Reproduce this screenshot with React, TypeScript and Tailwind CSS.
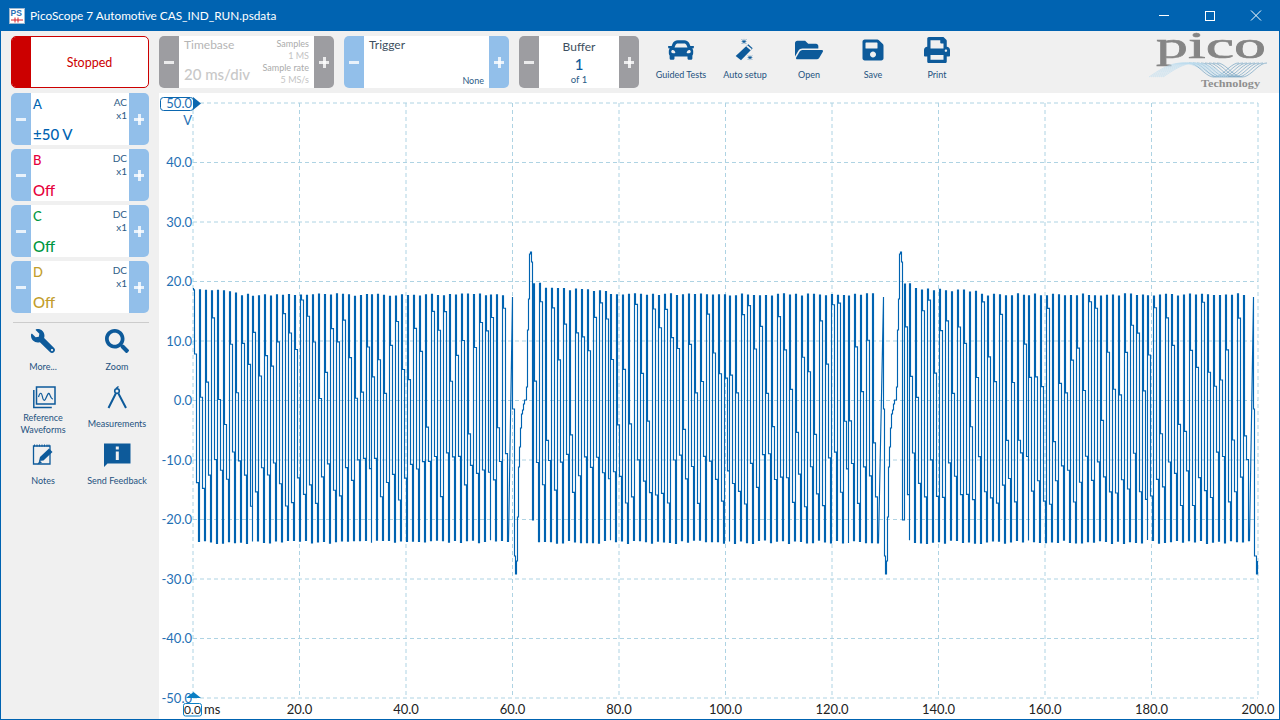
import { ReactNode } from "react";
import { FaCar, FaFolderOpen, FaPrint, FaSave, FaSearch, FaWrench } from "react-icons/fa";

const uiFont = { fontFamily: 'Lato, "Open Sans", sans-serif' };

const rnd = (n: number) => {
  const v = Math.sin(n * 12.9898) * 43758.5453;
  return v - Math.floor(v);
};

const REV = 370.4;

// one firing event, coordinates taken at the first one and shifted per revolution
const eventPoints: number[][] = [
  [512.7, 297], [512.7, 409], [514, 409], [514, 556], [515.5, 556], [515.5, 574], [516.4, 574], [516.4, 561],
  [517.4, 561], [517.4, 517], [518, 517], [518, 467], [519, 467], [519, 447], [520, 447], [520, 428],
  [521, 428], [521, 414], [522, 414], [522, 410], [523, 410], [523, 404], [524.5, 404], [524.5, 400],
  [526.4, 400], [526.4, 387], [527.2, 387], [527.2, 330], [528.2, 330], [528.2, 299], [529.3, 299],
  [529.3, 254], [530.5, 254], [530.5, 252], [531.2, 252], [531.2, 262], [532.2, 262], [532.2, 520], [533.6, 520],
];

const snap = (x: number) => Math.floor(x) + 0.5;

function buildWave() {
  const pts: number[][] = [];
  let x = 193.5;
  let i = 0;
  let k = 0;
  pts.push([x, 288]);
  while (x < 1258) {
    const nextEvent = 512.7 + REV * k;
    if (x + 5.95 > nextEvent) {
      eventPoints.forEach(([ex, ey]) => pts.push([snap(ex + REV * k), ey]));
      x = 533.6 + REV * k;
      k++;
      continue;
    }
    const u = (((x - 533) % REV) + REV) % REV / REV;
    let top = u < 0.2 ? 288 + u * 20 : 295;
    if (u < 0.02) top = 284;
    top += rnd(i + 3) * 2.4 - 1.2;
    const low = rnd(i + 50) * 100;
    const a = low > 86 ? 420 + rnd(i + 7) * 25 : 300 + rnd(i + 9) * 100;
    const c = 452 + rnd(i + 21) * 55;
    const bottom = 540 + rnd(i + 33) * 3.5;
    const x0 = snap(x);
    pts.push([x0, top], [x0 + 1, top], [x0 + 1, a], [x0 + 3, a], [x0 + 3, c], [x0 + 5, c], [x0 + 5, bottom], [snap(x + 5.95), bottom]);
    x += 5.95;
    i++;
  }
  return pts.filter((p) => p[0] <= 1258).map((p) => `${p[0].toFixed(1)},${p[1].toFixed(1)}`).join(" ");
}

const wave = buildWave();
const gridX = [193, 299.5, 406, 512.5, 619, 725.5, 832, 938.5, 1045, 1151.5, 1258];
const gridY = [103, 162.5, 222, 281.5, 341, 400.5, 460, 519.5, 579, 638.5, 698];
const yLabels = ["", "40.0", "30.0", "20.0", "10.0", "0.0", "-10.0", "-20.0", "-30.0", "-40.0", "-50.0"];
const xLabels = ["", "20.0", "40.0", "60.0", "80.0", "100.0", "120.0", "140.0", "160.0", "180.0", "200.0"];

function Scope() {
  return (
    <svg viewBox="159 93 1120 625" className="block w-[1120px] h-[625px]" style={uiFont}>
      {gridY.map((y) => (
        <line key={y} x1={193} x2={1258} y1={y} y2={y} stroke="#aed3e3" strokeWidth={1} strokeDasharray="4 3" />
      ))}
      {gridX.map((x) => (
        <line key={x} x1={x} x2={x} y1={103} y2={698} stroke="#aed3e3" strokeWidth={1} strokeDasharray="4 3" />
      ))}
      <polyline points={wave} fill="none" stroke="#0063b1" strokeWidth={1.15} />
      {yLabels.map((l, i) => (
        <text key={l + i} x={192} y={gridY[i] + 4.5} textAnchor="end" fontSize={13} fill="#1f70b4">{l}</text>
      ))}
      {xLabels.map((l, i) => (
        <text key={l + i} x={gridX[i]} y={714} textAnchor="middle" fontSize={13} fill="#222">{l}</text>
      ))}
      <rect x={160.5} y={97.5} width={33} height={13} rx={3} fill="#fff" stroke="#0b67b0" strokeWidth={1} />
      <polygon points="193,97 201,103.5 193,110" fill="#0b67b0" />
      <text x={192} y={108} textAnchor="end" fontSize={13} fill="#1f70b4">50.0</text>
      <text x={192} y={125} textAnchor="end" fontSize={13} fill="#1f70b4">V</text>
      <polygon points="186,698 193.5,692 201,698" fill="#0b7fc4" />
      <rect x={183.5} y={703.5} width={18} height={12.5} rx={2} fill="#fff" stroke="#0b7fc4" strokeWidth={1} />
      <text x={192.5} y={714} textAnchor="middle" fontSize={12} fill="#222">0.0</text>
      <text x={204} y={714} fontSize={13} fill="#222">ms</text>
    </svg>
  );
}

function Stepper({ side, tone }: { side: "minus" | "plus"; tone: "blue" | "gray" }) {
  return (
    <div
      className={`w-5 shrink-0 flex items-center justify-center ${tone === "blue" ? "bg-[#92bfea]" : "bg-[#9d9da1]"}`}
    >
      <div className="relative w-[10px] h-[11px]">
        <div className="absolute left-0 right-0 top-[4px] h-[3px] bg-white/80" />
        {side === "plus" && <div className="absolute top-0 bottom-0 left-[4px] w-[3px] bg-white/80" />}
      </div>
    </div>
  );
}

function Control({ width, tone, children }: { width: string; tone: "blue" | "gray"; children: ReactNode }) {
  return (
    <div className={`flex h-[52px] rounded-[5px] overflow-hidden ${width}`}>
      <Stepper side="minus" tone={tone} />
      <div className="flex-1 bg-white relative min-w-0">{children}</div>
      <Stepper side="plus" tone={tone} />
    </div>
  );
}

function Channel({ name, color, coupling, value }: { name: string; color: string; coupling: string; value: string }) {
  return (
    <Control width="w-[138px]" tone="blue">
      <div className="flex h-full justify-between pl-[2px] pr-[2px] pt-[3px]">
        <div className="flex flex-col justify-between pb-[2px]">
          <div className={`text-[13px] leading-[16px] font-medium ${color}`}>{name}</div>
          <div className={`text-[15px] leading-[18px] font-medium ${color}`}>{value}</div>
        </div>
        <div className="text-right text-[10px] leading-[13px] text-[#2d5b86]">
          <div>{coupling}</div>
          <div>x1</div>
        </div>
      </div>
    </Control>
  );
}

function ToolbarButton({ icon, label }: { icon: ReactNode; label: string }) {
  return (
    <div className="w-16 flex flex-col items-center pt-[6px]">
      <div className="h-[26px] flex items-center justify-center text-[#0d5a9a]">{icon}</div>
      <div className="mt-[5px] text-[9px] leading-[14px] text-[#24527f] whitespace-nowrap">{label}</div>
    </div>
  );
}

function SideTool({ icon, label, gap }: { icon: ReactNode; label: ReactNode; gap: string }) {
  return (
    <div className="h-[57px] flex flex-col items-center">
      <div className="h-[24px] flex items-center justify-center text-[#0d5a9a]">{icon}</div>
      <div className={`text-[9px] leading-[12px] text-center text-[#24527f] whitespace-nowrap ${gap}`}>{label}</div>
    </div>
  );
}

function MagicIcon() {
  return (
    <svg width="24" height="24" viewBox="0 0 24 24" fill="currentColor">
      <path d="M15.300 6.300L19.700 10.300L8 22.300L2.700 18z" />
      <path d="M13.200 8.500L14.400 7.200L18.800 11L17.600 12.300z" fill="#f0f0f0" />
      <path d="M11 0.600L11.500 3L14 3.600L11.500 4.200L11 6.600L10.500 4.200L8 3.600L10.500 3z" />
      <path d="M8.800 1.400L13.200 5.800M13.200 1.400L8.800 5.800" stroke="currentColor" strokeWidth="0.700" />
      <path d="M17 16.800L17.500 19L20 19.600L17.500 20.200L17 22.400L16.500 20.200L14 19.600L16.500 19z" />
      <path d="M15 17.600L19 21.600M19 17.600L15 21.600" stroke="currentColor" strokeWidth="0.700" />
    </svg>
  );
}

function RefWaveIcon() {
  return (
    <svg width="25" height="24" viewBox="0 0 25 24" fill="none" stroke="currentColor" strokeWidth="1.500">
      <rect x="5.500" y="1" width="18.500" height="17" fill="#f0f0f0" />
      <path d="M2.800 4v17.500h18" />
      <path d="M7.500 11c1.500-5 3-5 4 0s2.500 3.500 3.500 1 2.500-6 3.500-4 1.500 5 3.500 5" strokeWidth="1.200" />
    </svg>
  );
}

function CalipersIcon() {
  return (
    <svg width="22" height="24" viewBox="0 0 22 24" fill="none" stroke="currentColor" strokeWidth="2">
      <circle cx="11" cy="5" r="2.300" strokeWidth="1.600" />
      <path d="M9.800 7.500L2.500 22M12.400 7.500L20 22" />
      <path d="M10 2.500L12.500 0.500" strokeWidth="1.400" />
    </svg>
  );
}

function NotesIcon() {
  return (
    <svg width="22" height="24" viewBox="0 0 22 24" fill="none" stroke="currentColor" strokeWidth="1.300">
      <path d="M1.500 3h16.500v18H1.500z" />
      <path d="M2.500 1.500v2M5 1.500v2M7.500 1.500v2M10 1.500v2M12.500 1.500v2M15 1.500v2M17 1.500v2" strokeWidth="1" />
      <path d="M7 18l1-4 9-8.500 3.500 3.500-9 8.500z" fill="currentColor" stroke="none" />
      <path d="M5.500 21.500l2-4 2.500 2z" fill="currentColor" stroke="none" />
    </svg>
  );
}

function FeedbackIcon() {
  return (
    <svg width="28" height="24" viewBox="0 0 28 24" fill="currentColor">
      <path d="M1 0.500h26.500v20H4.500L1 24z" />
      <rect x="12.800" y="3.500" width="3" height="3" fill="#f0f0f0" />
      <rect x="12.800" y="8.500" width="3" height="8.500" fill="#f0f0f0" />
    </svg>
  );
}

function AppIcon() {
  return (
    <svg width="16" height="16" viewBox="0 0 16 16">
      <rect x="0.500" y="0.500" width="15" height="15" fill="#fff" stroke="#9db8d0" />
      <text x="1.500" y="8" fontSize="8.500" fontWeight="700" fill="#2a6fb5" fontFamily="Liberation Sans, sans-serif">PS</text>
      <path d="M2 12h4v-2.500M6 12v2.500M6 12h3M9 9.500v5M9 12h5" stroke="#d8232a" strokeWidth="1" fill="none" />
    </svg>
  );
}

function PicoLogo() {
  const curves: ReactNode[] = [];
  for (let n = 0; n < 8; n++) {
    const light: string[] = [];
    const dark: string[] = [];
    for (let t = 0; t <= 1.001; t += 0.05) {
      const lx = 2 * n + t * 65;
      light.push(`${lx.toFixed(1)},${(46 - 14 * Math.sin(Math.PI * t)).toFixed(1)}`);
      const dx = 40 + 4 * n + t * 50;
      dark.push(`${dx.toFixed(1)},${(39 - 7 * Math.cos(2 * Math.PI * t)).toFixed(1)}`);
    }
    curves.push(<polyline key={`l${n}`} points={light.join(" ")} fill="none" stroke="#bcdcee" strokeWidth="0.6" />);
    curves.push(<polyline key={`d${n}`} points={dark.join(" ")} fill="none" stroke="#5c93b8" strokeWidth="0.6" />);
  }
  return (
    <svg width="122" height="60" viewBox="0 0 122 60" className="block overflow-visible">
      <text x="7" y="27" fontSize="38" fontFamily="Liberation Serif, serif" fill="#858585" stroke="#858585" strokeWidth="0.6"
        textLength="110" lengthAdjust="spacingAndGlyphs">pico</text>
      {curves}
      <text x="52" y="56" fontSize="10.500" fontWeight="700" fontFamily="Liberation Serif, serif" fill="#8f8f8f"
        textLength="59" lengthAdjust="spacingAndGlyphs">Technology</text>
    </svg>
  );
}

export default function App() {
  return (
    <div className="w-[1280px] h-[720px] flex flex-col overflow-hidden bg-[#f0f0f0] border-x border-b border-[#0063b1]" style={uiFont}>
      <div className="h-[31px] shrink-0 -mx-px flex items-center bg-[#0063b1] text-white">
        <div className="pl-[9px] pr-[5px] flex items-center"><AppIcon /></div>
        <div className="text-[11.8px] flex-1">PicoScope 7 Automotive CAS_IND_RUN.psdata</div>
        <div className="w-[46px] h-[31px] flex items-center justify-center">
          <div className="w-[10px] h-px bg-white" />
        </div>
        <div className="w-[46px] h-[31px] flex items-center justify-center">
          <div className="w-[10px] h-[10px] border border-white" />
        </div>
        <svg width="46" height="31" viewBox="0 0 46 31" className="mr-px">
          <path d="M18 10.500l10 10M28 10.500l-10 10" stroke="#fff" strokeWidth="1" />
        </svg>
      </div>

      <div className="h-[62px] shrink-0 flex items-start pl-[10px] pt-[5px] gap-[10px]">
        <div className="w-[138px] h-[52px] flex rounded-[5px] border border-[#cc0000] overflow-hidden bg-white">
          <div className="w-[19px] bg-[#cc0000]" />
          <div className="flex-1 flex items-center justify-center text-[12.5px] pt-[2px] text-[#cc0000]">Stopped</div>
        </div>

        <Control width="w-[175px]" tone="gray">
          <div className="h-full flex justify-between px-[5px]">
            <div className="flex flex-col justify-between pb-[4px] text-[#b5b5b5]">
              <div className="text-[12px] leading-[18px]">Timebase</div>
              <div className="text-[15px] leading-[20px] font-medium text-[#c8c8c8]">20 ms/div</div>
            </div>
            <div className="text-right text-[9px] leading-[12px] pt-[2px] text-[#ababab]">
              <div>Samples</div>
              <div className="text-[#c4c4c4]">1 MS</div>
              <div>Sample rate</div>
              <div className="text-[#c4c4c4]">5 MS/s</div>
            </div>
          </div>
        </Control>

        <Control width="w-[165px]" tone="blue">
          <div className="h-full flex flex-col justify-between px-[5px]">
            <div className="text-[12px] leading-[18px] text-[#3d4f60]">Trigger</div>
            <div className="text-right text-[9px] leading-[14px] text-[#2d5b86]">None</div>
          </div>
        </Control>

        <Control width="w-[120px]" tone="gray">
          <div className="h-full flex flex-col items-center pt-[2px]">
            <div className="text-[12px] leading-[18px] text-[#3d4f60]">Buffer</div>
            <div className="text-[15px] leading-[17px] font-medium text-[#0d5a9a]">1</div>
            <div className="text-[9.5px] leading-[14px] text-[#2d5b86]">of 1</div>
          </div>
        </Control>

        <div className="flex -mt-[5px]">
          <ToolbarButton icon={<FaCar size={26} />} label="Guided Tests" />
          <ToolbarButton icon={<MagicIcon />} label="Auto setup" />
          <ToolbarButton icon={<FaFolderOpen size={28} />} label="Open" />
          <ToolbarButton icon={<FaSave size={24} />} label="Save" />
          <ToolbarButton icon={<FaPrint size={26} />} label="Print" />
        </div>

        <div className="ml-auto -mt-[5px] pr-[8px]"><PicoLogo /></div>
      </div>

      <div className="flex flex-1 min-h-0">
        <div className="w-[158px] shrink-0 flex flex-col pl-[10px]">
          <div className="flex flex-col gap-1">
            <Channel name="A" color="text-[#0063b1]" coupling="AC" value="±50 V" />
            <Channel name="B" color="text-[#e6003c]" coupling="DC" value="Off" />
            <Channel name="C" color="text-[#00963f]" coupling="DC" value="Off" />
            <Channel name="D" color="text-[#c29d2c]" coupling="DC" value="Off" />
          </div>
          <div className="mt-[9px] ml-[2px] w-[136px] h-px bg-[#cccccc]" />
          <div className="mt-[6px] -ml-[5px] w-[148px] grid grid-cols-2">
            <SideTool icon={<FaWrench size={24} className="-scale-x-100" />} label="More..." gap="mt-[8px]" />
            <SideTool icon={<FaSearch size={24} />} label="Zoom" gap="mt-[8px]" />
            <SideTool icon={<RefWaveIcon />} label={<>Reference<br />Waveforms</>} gap="mt-[2px]" />
            <SideTool icon={<CalipersIcon />} label="Measurements" gap="mt-[8px]" />
            <SideTool icon={<NotesIcon />} label="Notes" gap="mt-[8px]" />
            <SideTool icon={<FeedbackIcon />} label="Send Feedback" gap="mt-[8px]" />
          </div>
        </div>
        <div className="flex-1 bg-white min-w-0"><Scope /></div>
      </div>
    </div>
  );
}
